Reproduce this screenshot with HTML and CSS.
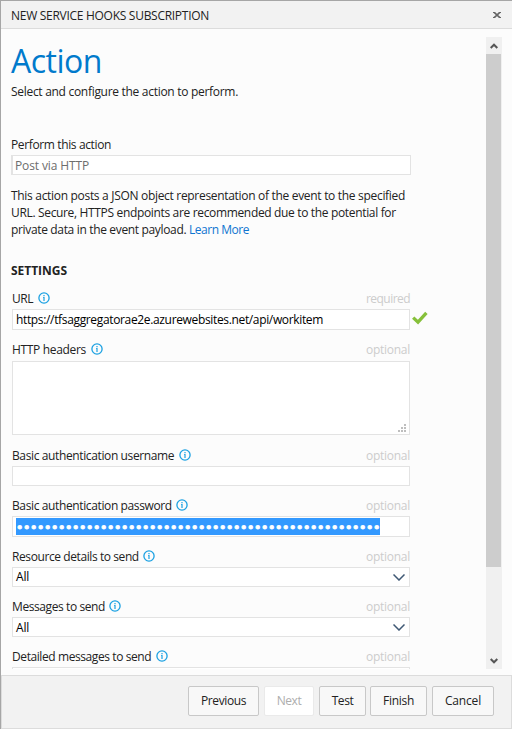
FILE: index.html
```html
<!DOCTYPE html>
<html lang="en">
<head>
<meta charset="utf-8">
<title>New Service Hooks Subscription</title>
<link rel="stylesheet" href="styles.css">
</head>
<body>
<svg class="defs" width="0" height="0" aria-hidden="true">
  <symbol id="info" viewBox="0 0 12 12">
    <circle cx="6" cy="6" r="5.1" fill="none" stroke="#1ba1e2" stroke-width="1.3"/>
    <path d="M5.4 3h1.2v1.2H5.4zM5 5h1.6v4H5.4V5.8H5z" fill="#1ba1e2"/>
  </symbol>
  <symbol id="chevron" viewBox="0 0 12 7">
    <path d="M.5.5 6 6 11.5.5" fill="none" stroke="#3f5874" stroke-width="1.5"/>
  </symbol>
</svg>
<div class="dialog">
  <header class="titlebar">
    <span class="title">NEW SERVICE HOOKS SUBSCRIPTION</span>
    <svg class="close" width="8" height="6" viewBox="0 0 8 6"><path d="M0 .5h2M6 .5h2M0 5.5h2M6 5.5h2" stroke="#666"/><path d="M1.2.4 6.8 5.6M6.8.4 1.2 5.6" stroke="#666" stroke-width="1.7"/></svg>
  </header>
  <main class="body">
    <div class="content">
      <h1>Action</h1>
      <p class="intro">Select and configure the action to perform.</p>
      <div class="action-label">Perform this action</div>
      <div class="action-box">Post via HTTP</div>
      <p class="desc"><span class="l1">This action posts a JSON object representation of the event to the specified</span><br><span class="l2">URL. Secure, HTTPS endpoints are recommended due to the potential for</span><br><span class="l2">private data in the event payload. </span><a>Learn More</a></p>
      <h2>SETTINGS</h2>
      <div class="field">
        <div class="label"><span class="t-url">URL</span><svg class="info"><use href="#info"/></svg><span class="hint req">required</span></div>
        <div class="row"><div class="box tall url">https://tfsaggregatorae2e.azurewebsites.net/api/workitem</div><svg class="check" width="16" height="14" viewBox="0 0 16 14"><path d="M1.2 6.6 6 11.2 14.4 1.8" fill="none" stroke="#86c03a" stroke-width="3.3"/></svg></div>
      </div>
      <div class="field area">
        <div class="label"><span class="t-headers">HTTP headers</span><svg class="info"><use href="#info"/></svg><span class="hint">optional</span></div>
        <div class="box textarea"><svg width="8" height="8" viewBox="0 0 8 8"><path d="M6 0h2v2H6zM3 3h2v2H3zM6 3h2v2H6zM0 6h2v2H0zM3 6h2v2H3zM6 6h2v2H6z" fill="#bebebe"/></svg></div>
      </div>
      <div class="field">
        <div class="label"><span class="t-auth">Basic authentication username</span><svg class="info"><use href="#info"/></svg><span class="hint">optional</span></div>
        <div class="box"></div>
      </div>
      <div class="field">
        <div class="label"><span class="t-auth">Basic authentication password</span><svg class="info"><use href="#info"/></svg><span class="hint">optional</span></div>
        <div class="box tall"><div class="selected">••••••••••••••••••••••••••••••••••••••••••••••••••••</div></div>
      </div>
      <div class="field">
        <div class="label"><span class="t-send">Resource details to send</span><svg class="info"><use href="#info"/></svg><span class="hint">optional</span></div>
        <div class="box select"><span>All</span><svg width="12" height="7"><use href="#chevron"/></svg></div>
      </div>
      <div class="field">
        <div class="label"><span class="t-send">Messages to send</span><svg class="info"><use href="#info"/></svg><span class="hint">optional</span></div>
        <div class="box select low"><span>All</span><svg width="12" height="7"><use href="#chevron"/></svg></div>
      </div>
      <div class="field">
        <div class="label"><span class="t-send">Detailed messages to send</span><svg class="info"><use href="#info"/></svg><span class="hint">optional</span></div>
        <div class="box"></div>
      </div>
    </div>
    <div class="scrollbar">
      <div class="arrow"><svg width="8" height="6" viewBox="0 0 8 6"><path d="M.7 5 4 1.7 7.3 5" fill="none" stroke="#555" stroke-width="2"/></svg></div>
      <div class="thumb"></div>
      <div class="arrow end"><svg width="8" height="6" viewBox="0 0 8 6"><path d="M.7 1 4 4.3 7.3 1" fill="none" stroke="#555" stroke-width="2"/></svg></div>
    </div>
  </main>
  <footer class="footer">
    <div class="btn previous">Previous</div>
    <div class="btn next">Next</div>
    <div class="btn test">Test</div>
    <div class="btn finish">Finish</div>
    <div class="btn cancel">Cancel</div>
  </footer>
</div>
</body>
</html>
```
FILE: styles.css
```css
* { box-sizing: border-box; margin: 0; padding: 0; }
body { font: 12px/17px "Open Sans", "Noto Sans", sans-serif; color: #222; overflow: hidden; }
svg { display: block; flex: none; }
.defs { position: absolute; }
.dialog { width: 512px; height: 729px; display: flex; flex-direction: column; background: #fcfcfc; border-top: 1px solid #a6a6a6; border-left: 1px solid #a6a6a6; }

.titlebar { flex: none; height: 28px; display: flex; justify-content: space-between; align-items: center; padding: 0 11px 0 10px; background: #f2f2f2; border-bottom: 1px solid #dcdcdc; }
.title { letter-spacing: -.283px; padding-top: 2px; }
.close { margin-top: 1px; }

.body { flex: none; height: 632px; margin-top: 8px; display: flex; overflow: hidden; }
.content { width: 485px; padding-left: 10px; }
h1 { font-size: 32px; font-weight: 380; line-height: 40px; height: 46px; padding-top: 4px; color: #007acc; letter-spacing: -.5px; }
.intro { letter-spacing: -.295px; white-space: nowrap; }
.action-label { margin-top: 36px; letter-spacing: -.371px; }
.action-box { width: 400px; height: 20px; margin-top: 2px; padding-left: 2px; line-height: 20px; color: #6d6d6d; background: #fff; border: 1px solid #e3e3e3; border-left-width: 2px; letter-spacing: -.127px; }
.desc { margin-top: 12px; white-space: nowrap; }
.l1 { letter-spacing: -.309px; }
.l2 { letter-spacing: -.34px; }
.desc a { color: #0f75d0; letter-spacing: -.47px; }
h2 { font-size: 12px; line-height: 17px; font-weight: 700; margin: 24px 0 11px; letter-spacing: -.03px; }

.field { width: 398px; margin: 0 0 11px 1px; }
.label { height: 19px; display: flex; white-space: nowrap; }
.info { width: 12px; height: 12px; margin: 2px 0 0 4.5px; }
.hint { margin-left: auto; color: #ccc; letter-spacing: -.268px; }
.req { letter-spacing: -.545px; }
.t-url { letter-spacing: -.47px; }
.t-headers { letter-spacing: -.323px; }
.t-auth { letter-spacing: -.377px; }
.t-send { letter-spacing: -.41px; }
.box { width: 398px; height: 20px; background: #fff; border: 1px solid #e3e3e3; flex: none; }
.tall { height: 21px; }
.row { display: flex; }
.url { padding: 1px 0 0 3px; color: #000; letter-spacing: -.347px; }
.check { margin: 2px 0 0 2px; }
.area { margin-bottom: 12px; }
.area .label { height: 20px; }
.textarea { height: 74px; display: flex; justify-content: flex-end; align-items: flex-end; padding: 0 3px 2px 0; }
.selected { width: 364px; height: 17px; margin: 1px 0 0 3px; white-space: nowrap; color: #fff; background: #3399ff; font-family: "DejaVu Sans", sans-serif; font-size: 12.5px; line-height: 19px; letter-spacing: -.375px; -webkit-text-stroke: .9px #fff; }
.select { display: flex; justify-content: space-between; padding: 0 4px 0 3px; color: #000; letter-spacing: -.2px; }
.select svg { margin-top: 6px; }
.low span { padding-top: 1px; }

.scrollbar { width: 16px; display: flex; flex-direction: column; background: #f0f0f0; }
.arrow { height: 17px; padding: 6px 0 0 4px; }
.thumb { width: 15px; height: 513px; background: #cdcdcd; }
.end { margin-top: auto; padding-top: 6px; }

.footer { margin-top: 6px; height: 54px; flex: none; display: flex; padding: 10px 0 0 187px; background: #f2f2f2; border: 1px solid #dcdcdc; }
.btn { height: 30px; line-height: 28px; text-align: center; background: #f8f8f8; border: 1px solid #c8c8c8; border-radius: 2px; letter-spacing: -.4px; flex: none; }
.previous { width: 71px; margin-left: -1px; }
.next { width: 50px; margin-left: 5px; color: #adadad; background: #fff; border-color: #eaeaea; }
.test { width: 47px; margin-left: 5px; }
.finish { width: 57px; margin-left: 4px; letter-spacing: -.28px; }
.cancel { width: 62px; margin-left: 5px; letter-spacing: -.18px; }
```
